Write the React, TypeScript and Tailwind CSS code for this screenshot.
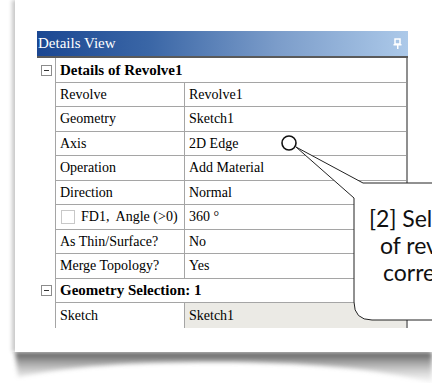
import React from "react";

const serif = { fontFamily: '"Liberation Serif", "Times New Roman", serif' };

type Row =
  | { kind: "cat"; label: string }
  | { kind: "prop"; label: string; value: string; check?: boolean; shaded?: boolean };

const rows: Row[] = [
  { kind: "cat", label: "Details of Revolve1" },
  { kind: "prop", label: "Revolve", value: "Revolve1" },
  { kind: "prop", label: "Geometry", value: "Sketch1" },
  { kind: "prop", label: "Axis", value: "2D Edge" },
  { kind: "prop", label: "Operation", value: "Add Material" },
  { kind: "prop", label: "Direction", value: "Normal" },
  { kind: "prop", label: "FD1,  Angle (>0)", value: "360 °", check: true },
  { kind: "prop", label: "As Thin/Surface?", value: "No" },
  { kind: "prop", label: "Merge Topology?", value: "Yes" },
  { kind: "cat", label: "Geometry Selection: 1" },
  { kind: "prop", label: "Sketch", value: "Sketch1", shaded: true },
];

function MinusBox() {
  return (
    <div className="w-[11px] h-[11px] border border-[#8c8c8c] bg-white flex items-center justify-center">
      <div className="w-[5px] h-px bg-[#333]" />
    </div>
  );
}

export default function App() {
  return (
    <div className="relative w-[432px] h-[383px] bg-white overflow-hidden" style={serif}>
      <div className="flex flex-col">
        {/* card */}
        <div className="ml-[15px] h-[352px] bg-white shadow-[-3px_0_4px_rgba(0,0,0,0.22)] pt-[31px] pl-[22px]">
          <div className="w-[371px] flex flex-col">
            {/* header */}
            <div className="h-[25px] flex items-center justify-between bg-[linear-gradient(90deg,#1b4792_0%,#3a66a6_30%,#7c9dca_65%,#acc9e9_100%)] pl-[1px] pr-[6px]">
              <span className="text-[15px] text-white leading-none">Details View</span>
              <svg width="9" height="11" viewBox="0 0 9 11">
                <rect x="2" y="1" width="5" height="5" fill="none" stroke="#fff" strokeWidth="1.5" />
                <rect x="0.5" y="6" width="8" height="1.5" fill="#fff" />
                <rect x="4" y="7" width="1.5" height="4" fill="#fff" />
              </svg>
            </div>
            <div className="h-[2px] bg-[#5a5a5a]" />
            {/* table */}
            <div className="flex flex-col border-r-2 border-[#8f8f8f]">
              {rows.map((r, i) => (
                <div key={i} className="flex h-[24.5px]">
                  <div className="w-[18px] flex items-center justify-center">
                    {r.kind === "cat" ? <MinusBox /> : null}
                  </div>
                  {r.kind === "cat" ? (
                    <div className={`flex-1 flex items-center pl-[4px] border-l border-[#a5a5a5] ${i === rows.length - 1 ? "" : "border-b"} border-[#a5a5a5]`}>
                      <span className="text-[15px] font-bold text-black">{r.label}</span>
                    </div>
                  ) : (
                    <>
                      <div className={`w-[130px] flex items-center pl-[4px] border-l border-r border-[#a5a5a5] ${i === rows.length - 1 ? "" : "border-b"}`}>
                        {r.check ? (
                          <div className="w-[14px] h-[14px] border border-[#c8c8c8] bg-white mr-[6px] ml-[1px]" />
                        ) : null}
                        <span className="text-[14px] text-black whitespace-pre">{r.label}</span>
                      </div>
                      <div className={`flex-1 flex items-center pl-[4px] border-[#a5a5a5] ${i === rows.length - 1 ? "" : "border-b"} ${r.shaded ? "bg-[#ebeae5]" : ""}`}>
                        <span className="text-[14px] text-black">{r.value}</span>
                      </div>
                    </>
                  )}
                </div>
              ))}
            </div>
          </div>
        </div>
        {/* curled bottom shadow */}
        <div className="h-[31px]">
          <svg width="432" height="31" viewBox="0 0 432 31">
            <defs>
              <linearGradient id="sh" x1="0" y1="0" x2="0" y2="1">
                <stop offset="0" stopColor="#505050" stopOpacity="0.95" />
                <stop offset="1" stopColor="#bdbdbd" stopOpacity="0.1" />
              </linearGradient>
              <filter id="bl" x="-5%" y="-50%" width="110%" height="200%">
                <feGaussianBlur stdDeviation="2" />
              </filter>
            </defs>
            <path d="M15,0 L432,0 L432,31 C380,16 300,10 215,10 C130,10 70,14 18,25 Z" fill="url(#sh)" filter="url(#bl)" />
          </svg>
        </div>
      </div>

      {/* callout overlay */}
      <svg className="absolute left-0 top-0" width="432" height="383" viewBox="0 0 432 383">
        <path
          d="M296,147 L363,183 L440,183 L440,320 L372,320 Q354,320 354,302 L354,198 Z"
          fill="#fff"
          stroke="#222"
          strokeWidth="1"
        />
        <circle cx="289" cy="143" r="7" fill="#fff" stroke="#111" strokeWidth="1.6" />
      </svg>
      <div
        className="absolute left-[369px] top-[205px] text-[23px] leading-[27px] text-[#111] whitespace-nowrap"
        style={{ fontFamily: 'Lato, "Open Sans", sans-serif' }}
      >
        <div>[2] Select edge</div>
        <div className="ml-[11px]">of revolution axis</div>
        <div className="ml-[14px]">correctly</div>
      </div>
    </div>
  );
}
